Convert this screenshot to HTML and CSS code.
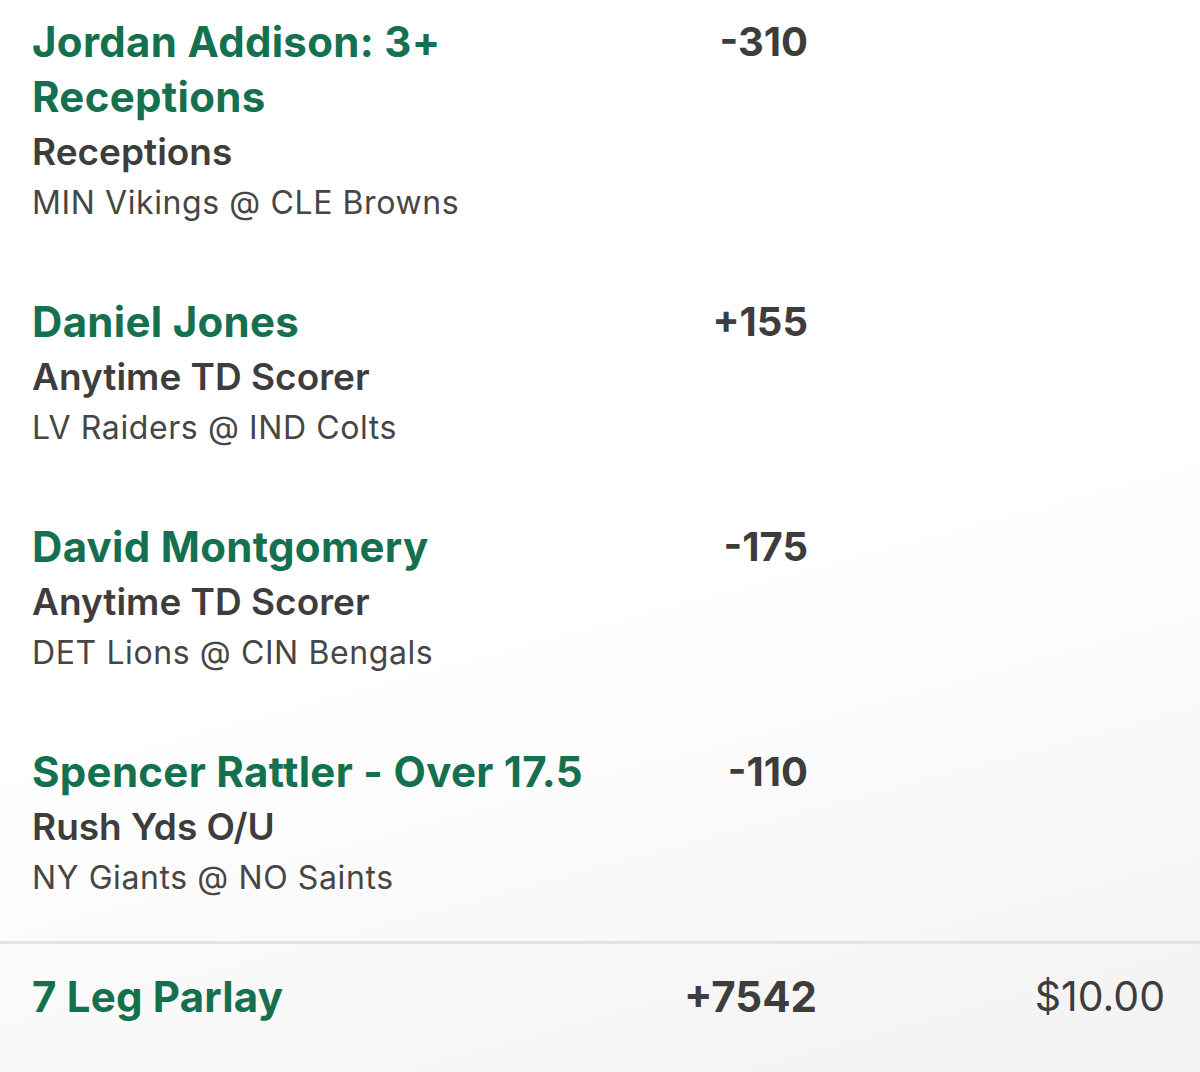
FILE: index.html
```html
<!DOCTYPE html>
<html lang="en">
  <head>
    <meta charset="UTF-8" />
    <meta name="viewport" content="width=device-width, initial-scale=1" />
    <title>Bet Slip</title>
    <link rel="stylesheet" href="styles.css">
  </head>
  <body>
    <div class="slip">
      <ul class="legs">
        <li class="leg">
          <div class="leg-info">
            <div class="leg-title">Jordan Addison: 3+ Receptions</div>
            <div class="leg-market">Receptions</div>
            <div class="leg-game">MIN Vikings @ CLE Browns</div>
          </div>
          <div class="leg-odds">-310</div>
        </li>
        <li class="leg">
          <div class="leg-info">
            <div class="leg-title">Daniel Jones</div>
            <div class="leg-market">Anytime TD Scorer</div>
            <div class="leg-game">LV Raiders @ IND Colts</div>
          </div>
          <div class="leg-odds">+155</div>
        </li>
        <li class="leg">
          <div class="leg-info">
            <div class="leg-title">David Montgomery</div>
            <div class="leg-market">Anytime TD Scorer</div>
            <div class="leg-game">DET Lions @ CIN Bengals</div>
          </div>
          <div class="leg-odds">-175</div>
        </li>
        <li class="leg">
          <div class="leg-info">
            <div class="leg-title">Spencer Rattler - Over 17.5</div>
            <div class="leg-market">Rush Yds O/U</div>
            <div class="leg-game">NY Giants @ NO Saints</div>
          </div>
          <div class="leg-odds">-110</div>
        </li>
      </ul>
      <div class="parlay">
        <div class="parlay-name">7 Leg Parlay</div>
        <div class="parlay-odds">+7542</div>
        <div class="parlay-stake">$10.00</div>
      </div>
    </div>
  </body>
</html>
```

FILE: styles.css
```css
:root {
  --green: #14704f;
  --text: #3d3d3d;
  --muted: #464646;
  --line: #e3e3e3;
}
body {
  margin: 0;
  min-height: 100vh;
  font-family: Inter, "Noto Sans", sans-serif;
  color: var(--text);
  background: linear-gradient(165deg, #fff 55%, #f2f2f2 100%);
}
.slip {
  width: 1200px;
}
ul {
  list-style: none;
  margin: 0;
  padding: 0;
}
.leg {
  display: flex;
  align-items: flex-start;
  padding: 14px 0 40px 32px;
}
.leg + .leg {
  margin-top: 14px;
}
.leg-info {
  width: 600px;
}
.leg-title {
  color: var(--green);
  font-size: 42px;
  font-weight: 700;
  letter-spacing: 0.3px;
  line-height: 55px;
}
.leg-market {
  font-size: 37px;
  font-weight: 600;
  line-height: 56px;
}
.leg-game {
  color: var(--muted);
  font-size: 32px;
  font-weight: 400;
  letter-spacing: 0.6px;
  line-height: 46px;
}
.leg-odds {
  width: 176px;
  text-align: right;
  font-size: 40px;
  font-weight: 700;
  line-height: 55px;
}
.parlay {
  display: flex;
  align-items: center;
  border-top: 3px solid var(--line);
  padding: 25px 35px 47px 32px;
  line-height: 55px;
}
.parlay-name {
  width: 500px;
  color: var(--green);
  font-size: 42px;
  font-weight: 700;
  letter-spacing: 0.2px;
}
.parlay-odds {
  width: 285px;
  text-align: right;
  font-size: 42px;
  font-weight: 700;
}
.parlay-stake {
  flex: 1;
  text-align: right;
  font-size: 41px;
  font-weight: 400;
}
```
